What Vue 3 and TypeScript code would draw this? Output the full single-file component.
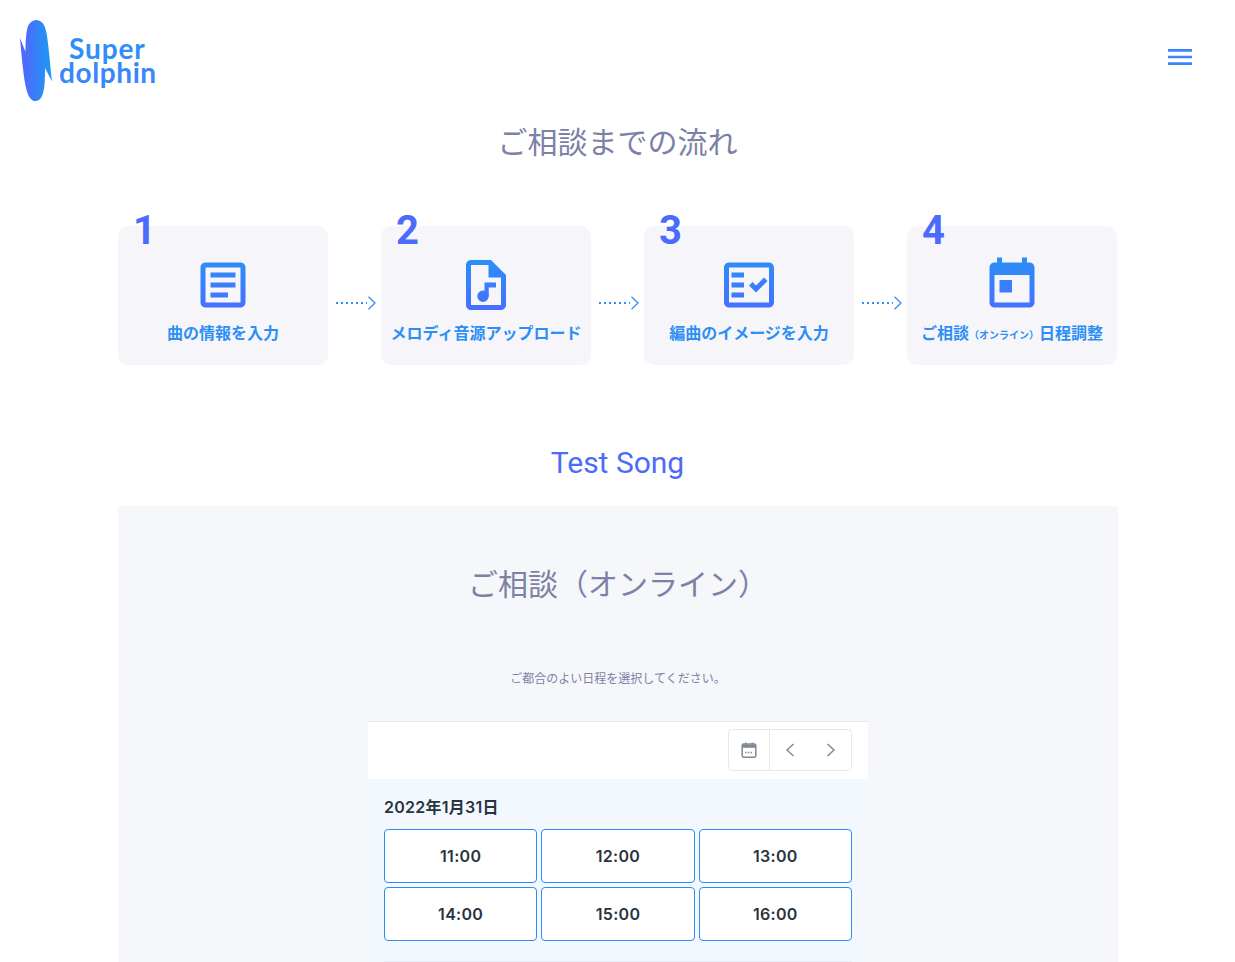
<script setup lang="ts">
interface Step {
  no: number;
  paths: string[];
  label?: string;
}

const steps: Step[] = [
  {
    no: 1,
    label: '曲の情報を入力',
    paths: [
      'M19 5v14H5V5h14m0-2H5c-1.1 0-2 .9-2 2v14c0 1.1.9 2 2 2h14c1.1 0 2-.9 2-2V5c0-1.1-.9-2-2-2z',
      'M14 17H7v-2h7v2zm3-4H7v-2h10v2zm0-4H7V7h10v2z',
    ],
  },
  {
    no: 2,
    label: 'メロディ音源アップロード',
    paths: [
      'M14 2H6c-1.1 0-2 .9-2 2v16c0 1.1.9 2 2 2h12c1.1 0 2-.9 2-2V8l-6-6zM13 4H6v16h12V9h-5V4z',
      'M13.100 16.500a2.300 2.300 0 1 1-4.600 0 2.300 2.300 0 0 1 4.600 0z',
      'M11.400 11H16v2h-2.900v3.500h-1.700z',
    ],
  },
  {
    no: 3,
    label: '編曲のイメージを入力',
    paths: [
      'M20 3H4c-1.1 0-2 .9-2 2v14c0 1.1.9 2 2 2h16c1.1 0 2-.9 2-2V5c0-1.1-.9-2-2-2zm0 16H4V5h16v14z',
      'M19.41 10.42 17.99 9l-3.17 3.17-1.41-1.42L12 12.16 14.82 15z',
      'M5 7h5v2H5zM5 11h5v2H5zM5 15h5v2H5z',
    ],
  },
  {
    no: 4,
    paths: [
      'M19 3h-1V1h-2v2H8V1H6v2H5c-1.11 0-1.99.9-1.99 2L3 19c0 1.1.89 2 2 2h14c1.1 0 2-.9 2-2V5c0-1.1-.9-2-2-2zm0 16H5V8h14v11z',
      'M7 10h5v5H7z',
    ],
  },
];

const times: string[] = ['11:00', '12:00', '13:00', '14:00', '15:00', '16:00'];
</script>

<template>
  <div class="page">
    <header class="header">
      <a class="logo">
        <svg class="logo-mark" width="32" height="82" viewBox="20 20 32 82">
          <defs>
            <linearGradient id="logoFill" x1="0" y1="0" x2="1" y2="0">
              <stop offset="0.1" stop-color="#5268ff" />
              <stop offset="0.9" stop-color="#1f96f2" />
            </linearGradient>
          </defs>
          <path
            fill="url(#logoFill)"
            d="M36 20C42 20 45 25 46.500 33C49 47 50 65 52 81.500L45 68C45 80 45 90 41.500 97C39 102 33 102.500 30 98C25 91 23 72 20 38L25.500 52C25.500 42 26 32 28 26C30 22 33 20 36 20Z"
          />
        </svg>
        <span class="logo-text">
          <span class="logo-super">Super</span>
          <span class="logo-dolphin">dolphin</span>
        </span>
      </a>
      <svg class="menu" width="32" height="32" viewBox="0 0 24 24">
        <path fill="#3d85fb" d="M3 18h18v-2H3v2zm0-5h18v-2H3v2zm0-7v2h18V6H3z" />
      </svg>
    </header>

    <h2 class="title">ご相談までの流れ</h2>

    <ol class="steps">
      <template v-for="(step, i) in steps" :key="step.no">
        <li class="step">
          <span class="step-no">{{ step.no }}</span>
          <svg class="step-icon" width="60" height="60" viewBox="0 0 24 24">
            <defs>
              <linearGradient :id="`stepFill${step.no}`" gradientUnits="userSpaceOnUse" x1="0" y1="1" x2="0" y2="22">
                <stop offset="0" stop-color="#2a90f6" />
                <stop offset="1" stop-color="#476fff" />
              </linearGradient>
            </defs>
            <path
              v-for="d in step.paths"
              :key="d"
              :d="d"
              fill-rule="evenodd"
              :fill="`url(#stepFill${step.no})`"
            />
          </svg>
          <p v-if="step.label" class="step-label">{{ step.label }}</p>
          <p v-else class="step-label">ご相談<small>（オンライン）</small>日程調整</p>
        </li>
        <li v-if="i < steps.length - 1" class="arrow">
          <svg width="41" height="14" viewBox="0 0 41 14">
            <path d="M1 7H32" fill="none" stroke="#2e90f6" stroke-width="2" stroke-dasharray="2 3" />
            <path d="M33.500 .8 40 7 33.500 13.200" fill="none" stroke="#2e90f6" stroke-width="1.300" />
          </svg>
        </li>
      </template>
    </ol>

    <h2 class="song">Test Song</h2>

    <section class="panel">
      <h2 class="panel-title">ご相談（オンライン）</h2>
      <p class="panel-note">ご都合のよい日程を選択してください。</p>

      <div class="calendar">
        <div class="toolbar">
          <div class="btn-group">
            <button class="tool tool-cal" type="button">
              <svg width="18" height="18" viewBox="0 0 18 18">
                <rect x="2.200" y="3" width="13.600" height="13.300" rx="1.500" fill="none" stroke="#7f8a96" stroke-width="1.500" />
                <path d="M2.500 3.500h13v3.300h-13z" fill="#7f8a96" />
                <path d="M5.800 1.500v3M12.200 1.500v3" stroke="#7f8a96" stroke-width="1.500" />
                <path d="M5 11.500h8" stroke="#7f8a96" stroke-width="1.500" stroke-dasharray="1.500 1.250" />
              </svg>
            </button>
            <button class="tool" type="button">
              <svg width="12" height="16" viewBox="0 0 12 16">
                <path d="M8.500 2 2 8l6.500 6" fill="none" stroke="#7f8a96" stroke-width="1.500" />
              </svg>
            </button>
            <button class="tool" type="button">
              <svg width="12" height="16" viewBox="0 0 12 16">
                <path d="M2.500 2 9 8l-6.500 6" fill="none" stroke="#7f8a96" stroke-width="1.500" />
              </svg>
            </button>
          </div>
        </div>
        <div class="day">
          <h3 class="day-title">2022年1月31日</h3>
          <div class="slots">
            <button v-for="time in times" :key="time" class="slot" type="button">{{ time }}</button>
          </div>
          <div class="day-rule"></div>
        </div>
      </div>
    </section>
  </div>
</template>

<style>
body {
  background: #fff;
}
</style>

<style scoped>
.page {
  height: 100vh;
  overflow: hidden;
  font-family: Inter, "Noto Sans CJK JP", sans-serif;
  color: #7d81a6;
}

.header {
  display: flex;
  justify-content: space-between;
  align-items: flex-start;
  height: 102px;
  padding: 20px 39px 0 20px;
}

.logo {
  display: flex;
  align-items: flex-start;
}

.logo-mark {
  display: block;
}

.logo-text {
  display: flex;
  flex-direction: column;
  margin: 17px 0 0 7px;
  font-family: Lato, sans-serif;
  font-size: 28px;
  font-weight: 700;
  letter-spacing: 0.6px;
  line-height: 23px;
  color: #2f8ff6;
}

.logo-super {
  margin-left: 10px;
  letter-spacing: 0.9px;
}

.logo-dolphin {
  margin-top: 1px;
  color: #3a88f8;
}

.menu {
  margin-top: 21px;
}

.title,
.panel-title {
  margin: 0;
  font-size: 30px;
  font-weight: 400;
  line-height: 40px;
  text-align: center;
  color: #7d81a6;
}

.steps {
  display: flex;
  width: 1000px;
  margin: 64px 0 0 118px;
  padding: 0;
  list-style: none;
}

.step {
  position: relative;
  display: flex;
  flex-direction: column;
  align-items: center;
  width: 210px;
  height: 139px;
  padding-top: 29px;
  box-sizing: border-box;
  border-radius: 10px;
  background: #f6f6fa;
}

.step-no {
  position: absolute;
  top: -19px;
  left: 15px;
  font-family: Roboto, sans-serif;
  font-size: 40px;
  font-weight: 700;
  line-height: 48px;
  color: #4d6bfb;
}

.step-icon {
  display: block;
}

.step-label {
  margin: 0;
  padding-top: 6px;
  font-size: 16px;
  font-weight: 700;
  line-height: 24px;
  white-space: nowrap;
  color: #2d8ff5;
}

.step-label small {
  font-size: 10px;
}

.arrow {
  display: flex;
  align-items: center;
  justify-content: flex-end;
  width: 53px;
  height: 153px;
  padding-right: 5px;
  box-sizing: border-box;
}

.arrow svg {
  display: block;
}

.song {
  margin: 64px 0 0;
  font-family: Roboto, sans-serif;
  font-size: 30px;
  font-weight: 400;
  line-height: 40px;
  text-align: center;
  color: #4d6bfb;
}

.panel {
  width: 1000px;
  margin: 23px 0 0 118px;
  padding-top: 58px;
  background: #f6f7fa;
}

.panel-note {
  margin: 66px 0 0;
  font-size: 12px;
  line-height: 18px;
  text-align: center;
}

.calendar {
  width: 500px;
  margin: 33px auto 0;
  border-top: 1px solid #e8eaee;
  background: #fff;
}

.toolbar {
  display: flex;
  justify-content: flex-end;
  height: 57px;
  padding: 7px 16px 0;
  box-sizing: border-box;
}

.btn-group {
  display: flex;
  height: 42px;
  border: 1px solid #e6e8ec;
  border-radius: 4px;
  box-sizing: border-box;
}

.tool {
  display: flex;
  align-items: center;
  justify-content: center;
  width: 40px;
  padding: 0;
  border: 0;
  background: none;
}

.tool-cal {
  width: 41px;
  border-right: 1px solid #e6e8ec;
}

.tool-cal + .tool {
  width: 41px;
}

.day {
  padding: 16px 16px 0;
  background: #f3f8ff;
}

.day-title {
  margin: 0 0 10px;
  font-size: 16px;
  font-weight: 600;
  letter-spacing: 0.25px;
  line-height: 24px;
  color: #2a3340;
}

.slots {
  display: grid;
  grid-template-columns: repeat(3, 1fr);
  gap: 4px;
}

.slot {
  height: 54px;
  padding: 0;
  border: 1px solid #2e8af6;
  border-radius: 4px;
  background: #fff;
  font-family: inherit;
  font-size: 16px;
  font-weight: 600;
  letter-spacing: 0.3px;
  color: #2a3340;
}

.day-rule {
  height: 1px;
  margin-top: 20px;
  background: #e6ecf5;
}
</style>
